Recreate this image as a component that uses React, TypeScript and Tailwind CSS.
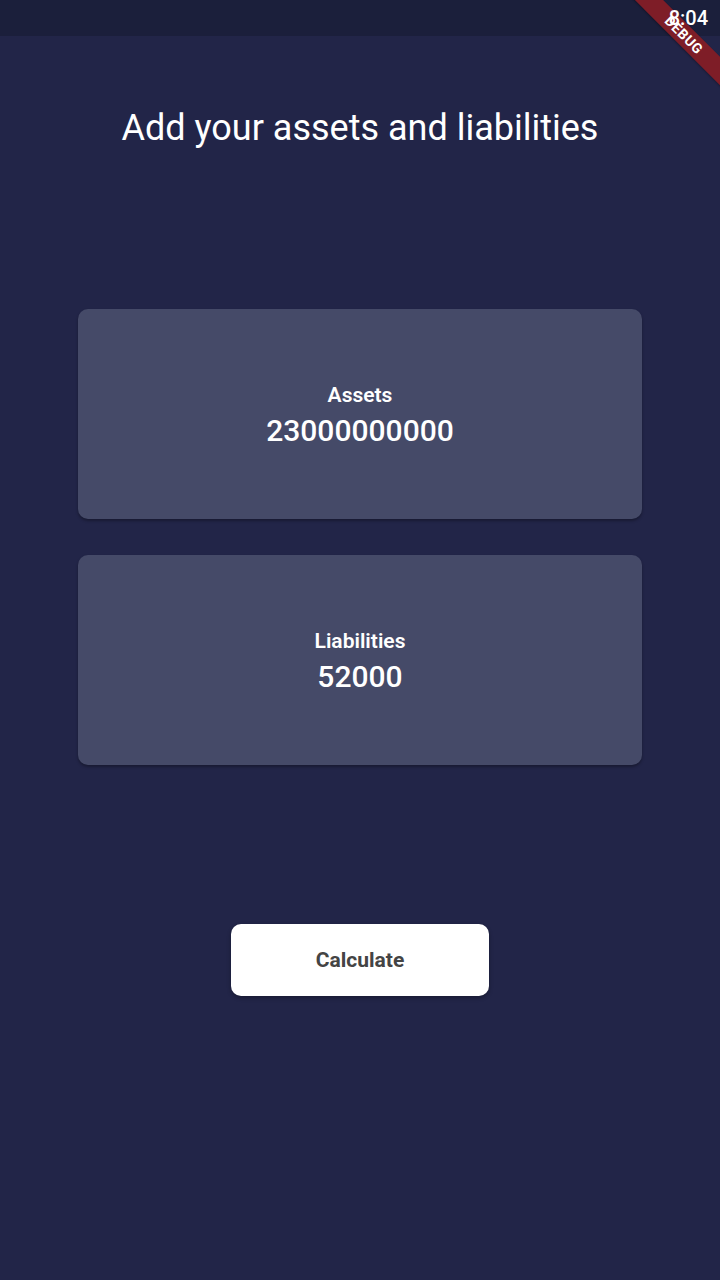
const Card = ({ label, value }: { label: string; value: string }) => (
  <div className="h-[210px] w-[564px] mx-auto pt-[4px] rounded-[10px] bg-[#454a68] shadow-[0_2px_3px_rgba(0,0,0,0.3)] flex flex-col items-center justify-center gap-[6px]">
    <div className="text-[21px] leading-[24px] font-semibold text-white">{label}</div>
    <div className="text-[30px] leading-[36px] font-medium text-white">{value}</div>
  </div>
)

export default function App() {
  return (
    <div className="relative min-h-[1280px] w-[720px] overflow-hidden bg-[#222548] font-['Roboto',sans-serif]">
      <div className="h-[36px] bg-[#1b1f3b] flex items-center justify-end pr-[12px]">
        <span className="relative z-20 text-[20px] leading-none font-medium text-white">8:04</span>
      </div>

      {/* debug ribbon */}
      <div className="absolute z-10 left-[604px] top-[25px] w-[160px] h-[20px] rotate-45 bg-[#7e1d27] flex items-center justify-center shadow-[0_1px_2px_rgba(0,0,0,0.3)]">
        <span className="text-[14px] leading-none font-bold tracking-[0.5px] text-white">DEBUG</span>
      </div>

      <h1 className="mt-[71px] text-center text-[36px] leading-[42px] font-normal text-white">
        Add your assets and liabilities
      </h1>

      <div className="mt-[160px] flex flex-col gap-[36px]">
        <Card label="Assets" value="23000000000" />
        <Card label="Liabilities" value="52000" />
      </div>

      <div className="mt-[159px] flex justify-center">
        <button className="w-[258px] h-[72px] pt-[2px] rounded-[10px] bg-white shadow-[0_2px_4px_rgba(0,0,0,0.3)] text-[21px] font-bold text-[#444444]">
          Calculate
        </button>
      </div>
    </div>
  )
}
